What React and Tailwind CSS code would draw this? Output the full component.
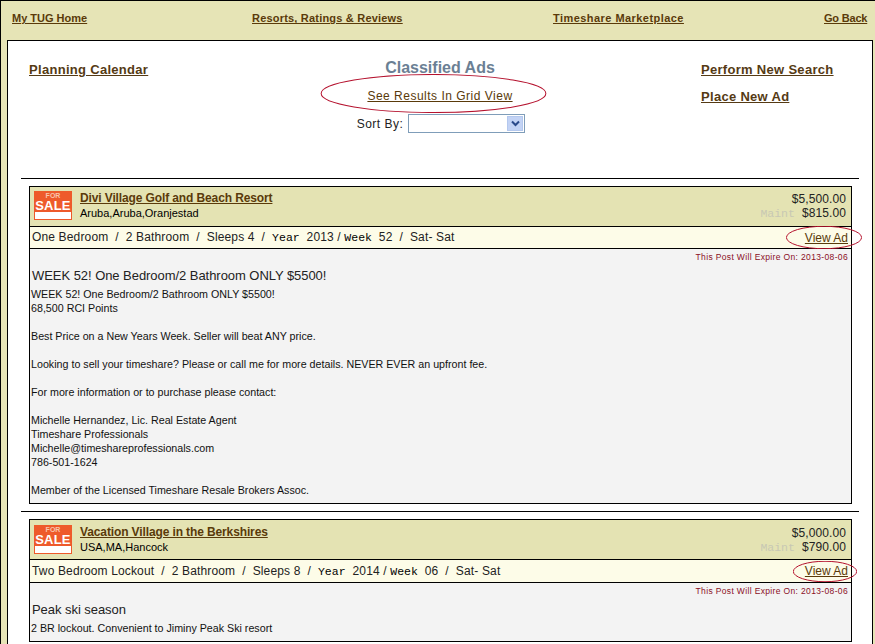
const navLink = "font-bold text-[11px] text-[#5a3a0a] underline";
const sideLink = "block font-bold text-[13px] tracking-[0.3px] leading-none text-[#553a14] underline";
const mono = "font-['Liberation_Mono',monospace] text-[11.5px] tracking-normal text-black";

// hand-drawn red circle laid over a link
function Oval({ className }) {
  return (
    <svg className={`absolute pointer-events-none ${className}`} viewBox="0 0 100 40" preserveAspectRatio="none" aria-hidden="true">
      <ellipse cx="50" cy="20" rx="49.5" ry="19.5" fill="none" stroke="#b5122e" strokeWidth="1" vectorEffect="non-scaling-stroke" />
    </svg>
  );
}

function SaleIcon() {
  return (
    <div className="w-[38px] h-[29px] bg-[#ee5a2b] flex flex-col items-center text-white font-bold leading-none shrink-0">
      <span className="text-[7px] h-[7px] mt-px text-[#f9c4aa]">FOR</span>
      <span className="text-[13px] h-[12px] tracking-[0.2px]">SALE</span>
      <div className="w-[36px] h-[7px] mt-[1px] bg-white" />
    </div>
  );
}

function AdCard({ title, location, price, maint, unit, bath, sleeps, year, week, heading, ovalClass, children, bodyClass, headClass, rowClass }) {
  return (
    <div className="ml-[21px] mr-[20px] border border-black bg-[#f3f3f3]">
      <div className={`h-[40px] bg-[#e4e3b3] flex items-start pl-[4px] pr-[5px] border-b border-black ${headClass}`}>
        <SaleIcon />
        <div className="ml-[8px] flex-1">
          <div className="font-bold text-[12px] leading-[15px] tracking-[-0.12px] text-[#5a3a0a] underline">{title}</div>
          <div className="text-[11px] leading-[14px] text-black">{location}</div>
        </div>
        <div className="text-right text-[12px] leading-[14px] tracking-[0.1px] text-[#222] pt-[1px]">
          <div>{price}</div>
          <div>
            <span className="font-['Liberation_Mono',monospace] text-[11.5px] tracking-normal text-[#c8c8b4] mr-[7px]">Maint</span>
            {maint}
          </div>
        </div>
      </div>
      <div className={`relative bg-[#fdfce8] border-b border-black flex items-center justify-between pl-[2px] pr-[3px] text-[12px] tracking-[0.15px] text-[#222] ${rowClass}`}>
        <div className="whitespace-pre">
          {unit}  /  {bath}  /  {sleeps}  /  <span className={mono}>Year </span>{year} / <span className={mono}>Week </span>{week}  /  Sat- Sat
        </div>
        <a className="text-[#5a3a0a] underline tracking-normal">View Ad</a>
        <Oval className={ovalClass} />
      </div>
      <div className={`pl-[1px] pr-[3px] ${bodyClass}`}>
        <div className="text-right text-[8.5px] tracking-[0.35px] leading-[12px] pt-[2px] text-[#8b0f1f]">This Post Will Expire On: 2013-08-06</div>
        <div className="text-[13px] tracking-[-0.05px] leading-[18px] mt-[4px] pl-px text-[#222]">{heading}</div>
        <div className="text-[10.7px] leading-[14px] mt-[2px] text-[#111]">{children}</div>
      </div>
    </div>
  );
}

export default function App() {
  return (
    <div className="w-[875px] h-[644px] overflow-hidden bg-[#e6e4b6] border-t border-l border-black font-['Liberation_Sans',Arial,sans-serif] flex flex-col">
      <nav className="h-[39px] shrink-0 pl-[11px] grid grid-cols-[240px_301px_271px_1fr] items-center pb-[4px]">
        <a className={`${navLink} tracking-[0px]`}>My TUG Home</a>
        <a className={`${navLink} tracking-[0.2px]`}>Resorts, Ratings &amp; Reviews</a>
        <a className={`${navLink} tracking-[0.45px]`}>Timeshare Marketplace</a>
        <a className={`${navLink} tracking-[-0.2px]`}>Go Back</a>
      </nav>

      <main className="ml-[6px] mr-[2px] flex-1 bg-white border border-black border-b-0 overflow-hidden">
        <div className="h-[137px] grid grid-cols-[171px_522px_1fr]">
          <div className="pl-[21px] pt-[22px]">
            <a className={sideLink}>Planning Calendar</a>
          </div>
          <div className="flex flex-col items-center pt-[17px]">
            <h1 className="font-bold text-[16px] leading-[19px] text-[#6b7f94]">Classified Ads</h1>
            <div className="relative mt-[12px]">
              <a className="block text-[12px] leading-[15px] tracking-[0.5px] text-[#5a3a0a] underline">See Results In Grid View</a>
              <Oval className="-left-[47px] -top-[15px] w-[227px] h-[39px]" />
            </div>
            <div className="flex items-center mt-[10px] ml-[2px]">
              <span className="text-[12px] tracking-[0.5px] text-[#222] mr-[5px]">Sort By:</span>
              <div className="w-[117px] h-[19px] border border-[#7f9db9] bg-white flex justify-end p-px">
                <div className="w-[16px] bg-[#c3d3f5] border border-[#b4c8ee] flex items-center justify-center">
                  <svg width="9" height="7" viewBox="0 0 9 7" aria-hidden="true">
                    <path d="M1 1.5 4.5 5 8 1.5" fill="none" stroke="#2a4a8a" strokeWidth="2" />
                  </svg>
                </div>
              </div>
            </div>
          </div>
          <div className="flex flex-col gap-[14px] pt-[22px] items-start">
            <a className={sideLink}>Perform New Search</a>
            <a className={sideLink}>Place New Ad</a>
          </div>
        </div>

        <div className="mx-[13px] border-t border-black" />
        <div className="h-[7px]" />
        <AdCard
          title="Divi Village Golf and Beach Resort"
          location="Aruba,Aruba,Oranjestad"
          price="$5,500.00"
          maint="$815.00"
          unit="One Bedroom"
          bath="2 Bathroom"
          sleeps="Sleeps 4"
          year="2013"
          week="52"
          heading="WEEK 52! One Bedroom/2 Bathroom ONLY $5500!"
          ovalClass="right-[-11px] top-[-1px] w-[76px] h-[23px]"
          bodyClass="h-[254px]"
          headClass="pt-[4px]"
          rowClass="h-[22px]"
        >
          WEEK 52! One Bedroom/2 Bathroom ONLY $5500!<br />
          68,500 RCI Points<br /><br />
          Best Price on a New Years Week. Seller will beat ANY price.<br /><br />
          Looking to sell your timeshare? Please or call me for more details. NEVER EVER an upfront fee.<br /><br />
          For more information or to purchase please contact:<br /><br />
          Michelle Hernandez, Lic. Real Estate Agent<br />
          Timeshare Professionals<br />
          Michelle@timeshareprofessionals.com<br />
          786-501-1624<br /><br />
          Member of the Licensed Timeshare Resale Brokers Assoc.
        </AdCard>
        <div className="h-[7px]" />
        <div className="mx-[13px] border-t border-black" />
        <div className="h-[7px]" />
        <AdCard
          title="Vacation Village in the Berkshires"
          location="USA,MA,Hancock"
          price="$5,000.00"
          maint="$790.00"
          unit="Two Bedroom Lockout"
          bath="2 Bathroom"
          sleeps="Sleeps 8"
          year="2014"
          week="06"
          heading="Peak ski season"
          ovalClass="right-[-6px] top-[1px] w-[64px] h-[21px]"
          bodyClass="h-[58px]"
          headClass="pt-[5px]"
          rowClass="h-[23px]"
        >
          2 BR lockout. Convenient to Jiminy Peak Ski resort
        </AdCard>
      </main>
    </div>
  );
}
